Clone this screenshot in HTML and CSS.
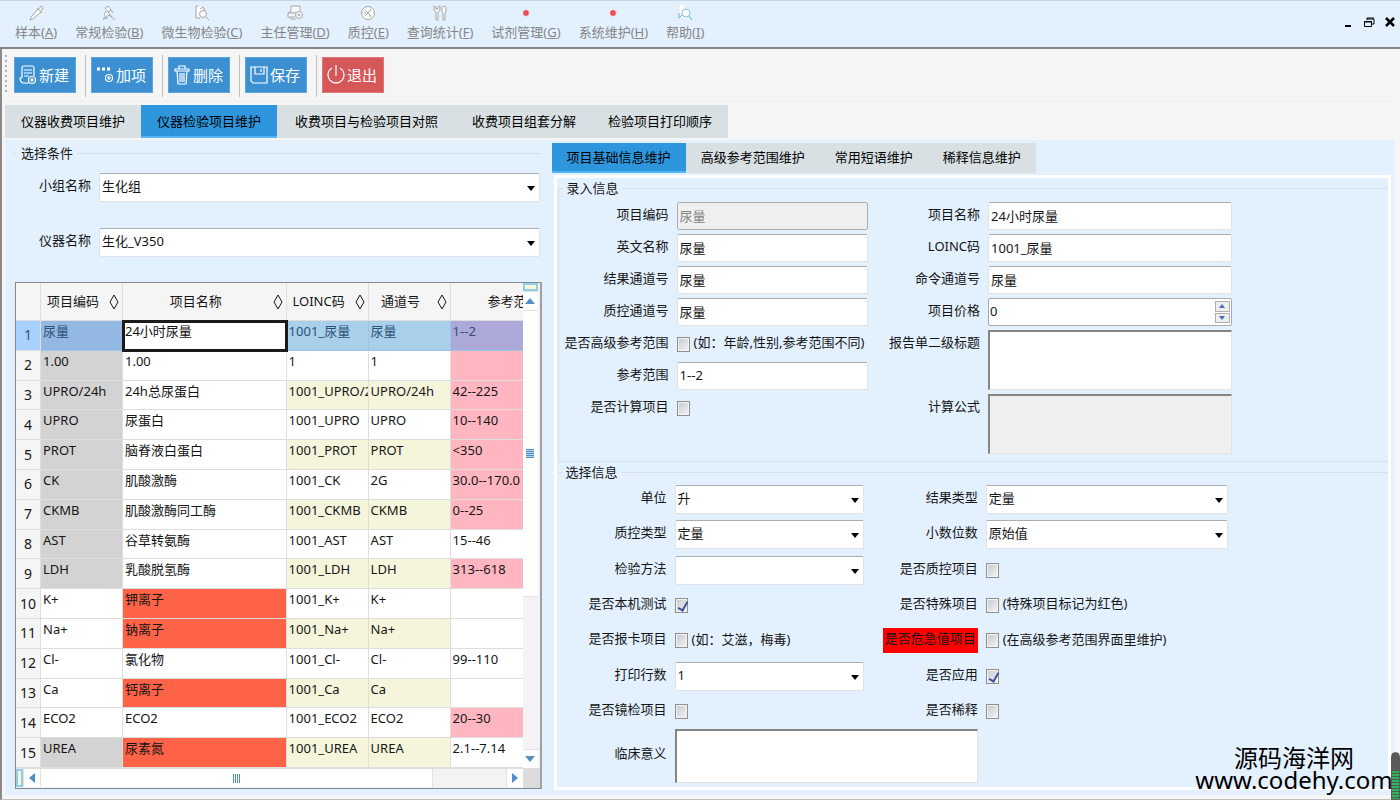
FILE: index.html
```html
<!DOCTYPE html>
<html lang="zh-CN">
<head>
<meta charset="utf-8">
<title>项目维护</title>
<link rel="stylesheet" href="styles.css">
</head>
<body>
<header class="menubar">
  <nav class="menu">
    <a href="#"><svg class="mi" viewBox="0 0 16 16"><path d="M2 15l1-3 7-8 3 3-8 7zM9 3l5 5M11 4l2-3 2 2-2 3"/></svg><span>样本(<u>A</u>)</span></a>
    <a href="#"><svg class="mi" viewBox="0 0 16 16"><path d="M4 3l3-2 3 4-3 2zM7 7l4 5M10 5l2 3M5 6c-2 2-2 5 0 7M2 15l6-5M8 10l6 5M2 13h5"/></svg><span>常规检验(<u>B</u>)</span></a>
    <a href="#"><svg class="mi" viewBox="0 0 16 16"><path class="page" d="M2 1h6l3 3v9H2z"/><path d="M4 1H2v12h4M6 4l3-2 2 4"/><circle cx="9" cy="9" r="3.5"/><path d="M12 12l3 3"/></svg><span>微生物检验(<u>C</u>)</span></a>
    <a href="#"><svg class="mi" viewBox="0 0 16 16"><path d="M4 6V1h9v5M1 8h8M1 8v4h7M4 12v2h5M4 6L1 8"/><circle cx="12" cy="10" r="3.5"/><circle cx="12" cy="10" r="1"/></svg><span>主任管理(<u>D</u>)</span></a>
    <a href="#"><svg class="mi" viewBox="0 0 16 16"><circle cx="8" cy="8" r="6.5"/><path d="M5 5l6 6M11 4l-3 4-3 3M4 8h2M9 11h2"/></svg><span>质控(<u>E</u>)</span></a>
    <a href="#"><svg class="mi" viewBox="0 0 16 16"><path d="M2 1v4l2 2v8h2V7l2-2V1L6 2v2H4V2zM10 2c0-1 4-1 4 0v5l-1 1v7h-2V8l-1-1z"/></svg><span>查询统计(<u>F</u>)</span></a>
    <a href="#"><svg class="mi dot" viewBox="0 0 16 16"><circle cx="8" cy="8" r="3"/><circle class="core" cx="8" cy="8" r="1.5"/></svg><span>试剂管理(<u>G</u>)</span></a>
    <a href="#"><svg class="mi dot" viewBox="0 0 16 16"><circle cx="8" cy="8" r="3"/><circle class="core" cx="8" cy="8" r="1.5"/></svg><span>系统维护(<u>H</u>)</span></a>
    <a href="#"><svg class="mi help" viewBox="0 0 16 16"><path class="page" d="M2 0h6v13H2z"/><path d="M2 8v5l4-4"/><circle class="page" cx="9" cy="8" r="4"/><path d="M12 11l3 4"/></svg><span>帮助(<u>I</u>)</span></a>
  </nav>
  <div class="winbtns">
    <button type="button" aria-label="最小化"><svg viewBox="0 0 12 12"><path d="M3 10h6" stroke-width="2"/></svg></button>
    <button type="button" aria-label="还原"><svg viewBox="0 0 12 12"><path d="M4 2h7M4 3h7v5H9M4 2v2" /><path d="M1.500 5.500h7v5h-7zM1 6h8" /></svg></button>
    <button type="button" aria-label="关闭"><svg viewBox="0 0 12 12"><path d="M2 2l8 8M10 2l-8 8" stroke-width="2.500"/></svg></button>
  </div>
</header>

<div class="window">
  <div class="toolbar">
    <span class="grip"></span>
    <button type="button" class="tool"><svg viewBox="0 0 18 20"><path d="M3 13V3q0-2 2-2h8q2 0 2 2v8M5 5h8M5 8h8M5 11h5M3 13H1q0 4 3 5h6"/><circle cx="13" cy="15" r="3.5"/><path d="M11 15h4M13 13v4"/></svg>新建</button>
    <button type="button" class="tool"><svg viewBox="0 0 18 20"><path d="M1 4h3M6 4h3M11 4h3" stroke-width="3"/><circle cx="13" cy="13" r="3.500"/><path d="M11 13h4M13 11v4"/></svg>加项</button>
    <button type="button" class="tool"><svg viewBox="0 0 18 20"><path d="M2 4h14v2H2zM6 4V1h6v3M4 6l1 13h8l1-13M7 8v9M9 8v9M11 8v9"/></svg>删除</button>
    <button type="button" class="tool"><svg viewBox="0 0 18 20"><path d="M1 2h16v16H3l-2-2zM5 2v7h9V2M11 4v3"/></svg>保存</button>
    <button type="button" class="tool exit"><svg viewBox="0 0 18 20"><path d="M5 3a8 8 0 1 0 8 0M9 0v11"/></svg>退出</button>
  </div>

  <nav class="tabs main-tabs">
    <button type="button">仪器收费项目维护</button><button type="button" class="active">仪器检验项目维护</button><button type="button" class="long">收费项目与检验项目对照</button><button type="button">收费项目组套分解</button><button type="button">检验项目打印顺序</button>
  </nav>

  <main class="work">
    <section class="left">
      <fieldset class="filter">
        <legend>选择条件</legend>
        <label for="grp">小组名称</label><span class="combo"><select id="grp"><option>生化组</option></select></span>
        <label for="dev">仪器名称</label><span class="combo"><select id="dev"><option>生化_V350</option></select></span>
      </fieldset>

      <div class="grid">
        <div class="sheet">
        <table>
          <colgroup><col class="c-no"><col class="c-std"><col><col class="c-std"><col class="c-std"><col class="c-range"></colgroup>
          <thead><tr>
            <th></th>
            <th><div>项目编码<svg viewBox="0 0 10 16"><path d="M5 1l4 7-4 7-4-7z"/></svg></div></th>
            <th><div>项目名称<svg viewBox="0 0 10 16"><path d="M5 1l4 7-4 7-4-7z"/></svg></div></th>
            <th><div>LOINC码<svg viewBox="0 0 10 16"><path d="M5 1l4 7-4 7-4-7z"/></svg></div></th>
            <th><div>通道号<svg viewBox="0 0 10 16"><path d="M5 1l4 7-4 7-4-7z"/></svg></div></th>
            <th class="cut">参考范围</th>
          </tr></thead>
          <tbody>
            <tr class="sel"><th>1</th><td class="gray">尿量</td><td class="cur">24小时尿量</td><td>1001_尿量</td><td>尿量</td><td class="pink">1--2</td></tr>
            <tr><th>2</th><td class="gray">1.00</td><td>1.00</td><td>1</td><td>1</td><td class="pink"></td></tr>
            <tr><th>3</th><td class="gray">UPRO/24h</td><td>24h总尿蛋白</td><td>1001_UPRO/24h</td><td>UPRO/24h</td><td class="pink">42--225</td></tr>
            <tr><th>4</th><td class="gray">UPRO</td><td>尿蛋白</td><td>1001_UPRO</td><td>UPRO</td><td class="pink">10--140</td></tr>
            <tr><th>5</th><td class="gray">PROT</td><td>脑脊液白蛋白</td><td>1001_PROT</td><td>PROT</td><td class="pink">&lt;350</td></tr>
            <tr><th>6</th><td class="gray">CK</td><td>肌酸激酶</td><td>1001_CK</td><td>2G</td><td class="pink">30.0--170.0</td></tr>
            <tr><th>7</th><td class="gray">CKMB</td><td>肌酸激酶同工酶</td><td>1001_CKMB</td><td>CKMB</td><td class="pink">0--25</td></tr>
            <tr><th>8</th><td class="gray">AST</td><td>谷草转氨酶</td><td>1001_AST</td><td>AST</td><td>15--46</td></tr>
            <tr><th>9</th><td class="gray">LDH</td><td>乳酸脱氢酶</td><td>1001_LDH</td><td>LDH</td><td class="pink">313--618</td></tr>
            <tr><th>10</th><td>K+</td><td class="tomato">钾离子</td><td>1001_K+</td><td>K+</td><td></td></tr>
            <tr><th>11</th><td>Na+</td><td class="tomato">钠离子</td><td>1001_Na+</td><td>Na+</td><td></td></tr>
            <tr><th>12</th><td>Cl-</td><td>氯化物</td><td>1001_Cl-</td><td>Cl-</td><td>99--110</td></tr>
            <tr><th>13</th><td>Ca</td><td class="tomato">钙离子</td><td>1001_Ca</td><td>Ca</td><td></td></tr>
            <tr><th>14</th><td>ECO2</td><td>ECO2</td><td>1001_ECO2</td><td>ECO2</td><td class="pink">20--30</td></tr>
            <tr><th>15</th><td class="gray">UREA</td><td class="tomato">尿素氮</td><td>1001_UREA</td><td>UREA</td><td>2.1--7.14</td></tr>
          </tbody>
        </table>
        </div>
        <div class="vbar">
          <i class="split"></i>
          <button type="button" aria-label="向上滚动"><svg viewBox="0 0 10 6"><path d="M0 6l5-6 5 6z"/></svg></button>
          <div class="thumb"><i class="lines"></i></div><div class="rest"></div>
          <button type="button" aria-label="向下滚动"><svg viewBox="0 0 10 6"><path d="M0 0l5 6 5-6z"/></svg></button>
        </div>
        <div class="hbar">
          <i class="split"></i>
          <button type="button" aria-label="向左滚动"><svg viewBox="0 0 6 10"><path d="M6 0L0 5l6 5z"/></svg></button>
          <div class="thumb"><i class="lines"></i></div><div class="rest"></div>
          <button type="button" aria-label="向右滚动"><svg viewBox="0 0 6 10"><path d="M0 0l6 5-6 5z"/></svg></button>
        </div>
        <div class="corner"></div>
      </div>
    </section>

    <section class="right">
      <nav class="tabs sub-tabs">
        <button type="button" class="active">项目基础信息维护</button><button type="button">高级参考范围维护</button><button type="button">常用短语维护</button><button type="button">稀释信息维护</button>
      </nav>
      <div class="panel">
        <fieldset class="entry">
          <legend>录入信息</legend>
          <div class="form">
            <label for="f1">项目编码</label><input id="f1" type="text" value="尿量" disabled>
            <label for="g1">项目名称</label><input id="g1" type="text" value="24小时尿量">
            <label for="f2">英文名称</label><input id="f2" type="text" value="尿量">
            <label for="g2">LOINC码</label><input id="g2" type="text" value="1001_尿量">
            <label for="f3">结果通道号</label><input id="f3" type="text" value="尿量">
            <label for="g3">命令通道号</label><input id="g3" type="text" value="尿量">
            <label for="f4">质控通道号</label><input id="f4" type="text" value="尿量">
            <label for="g4">项目价格</label>
            <span class="spin"><input id="g4" type="text" value="0"><span class="updown"><button type="button" aria-label="增加"><svg viewBox="0 0 6 4"><path d="M0 4l3-4 3 4z"/></svg></button><button type="button" aria-label="减少"><svg viewBox="0 0 6 4"><path d="M0 0l3 4 3-4z"/></svg></button></span></span>
            <label for="f5">是否高级参考范围</label><span class="check"><input id="f5" type="checkbox"><span>(如：年龄,性别,参考范围不同)</span></span>
            <label for="g5">报告单二级标题</label><textarea id="g5" class="two"></textarea>
            <label for="f6">参考范围</label><input id="f6" type="text" value="1--2">
            <label for="f7">是否计算项目</label><span class="check"><input id="f7" type="checkbox"></span>
            <label for="g7">计算公式</label><textarea id="g7" class="two" disabled></textarea>
          </div>
        </fieldset>
        <fieldset class="choice">
          <legend>选择信息</legend>
          <div class="form options">
            <label for="h1">单位</label><span class="combo"><select id="h1"><option>升</option></select></span>
            <label for="k1">结果类型</label><span class="combo"><select id="k1"><option>定量</option></select></span>
            <label for="h2">质控类型</label><span class="combo"><select id="h2"><option>定量</option></select></span>
            <label for="k2">小数位数</label><span class="combo"><select id="k2"><option>原始值</option></select></span>
            <label for="h3">检验方法</label><span class="combo"><select id="h3"><option></option></select></span>
            <label for="k3">是否质控项目</label><span class="check"><input id="k3" type="checkbox"></span>
            <label for="h4">是否本机测试</label><span class="check"><input id="h4" type="checkbox" checked></span>
            <label for="k4">是否特殊项目</label><span class="check"><input id="k4" type="checkbox"><span>(特殊项目标记为红色)</span></span>
            <label for="h5">是否报卡项目</label><span class="check"><input id="h5" type="checkbox"><span>(如：艾滋，梅毒)</span></span>
            <label for="k5" class="alert">是否危急值项目</label><span class="check"><input id="k5" type="checkbox"><span>(在高级参考范围界面里维护)</span></span>
            <label for="h6">打印行数</label><span class="combo"><select id="h6"><option>1</option></select></span>
            <label for="k6">是否应用</label><span class="check"><input id="k6" type="checkbox" checked></span>
            <label for="h7">是否镜检项目</label><span class="check"><input id="h7" type="checkbox"></span>
            <label for="k7">是否稀释</label><span class="check"><input id="k7" type="checkbox"></span>
            <label for="h8">临床意义</label><textarea id="h8" class="wide"></textarea>
          </div>
        </fieldset>
      </div>
    </section>
  </main>
</div>
<div class="meter"></div>
<div class="mark">源码海洋网<br>www.codehy.com</div>
</body>
</html>
```

FILE: styles.css
```css
* { box-sizing: border-box; }
html { height: 100%; }
body {
  margin: 0; min-height: 100%; display: flex; flex-direction: column; position: relative;
  font: 13px/18px "Noto Sans", "Noto Sans CJK SC", sans-serif; color: #151515; background: #f5f5f5;
}
button, input, select, textarea { font: inherit; color: inherit; margin: 0; border-radius: 0; }
button { padding: 0; border: 0; background: none; }
svg { fill: none; stroke: currentColor; display: block; }

.menubar {
  display: flex; justify-content: space-between; height: 49px; background: #e3f1ff;
  border-top: 1px solid #c6d6e6; border-bottom: 2px solid #858585;
}
.menu { display: flex; gap: 18px; padding: 4px 0 0 15px; }
.menu a { display: flex; flex-direction: column; align-items: center; gap: 1px; color: #858585; text-decoration: none; line-height: 20px; white-space: nowrap; }
.mi { width: 16px; height: 16px; stroke: #a5a5a5; fill: #fbfbfb; }
.mi .page { fill: #fff; stroke: #e8e8e8; }
.mi.dot { stroke: #f0959a; fill: #f25560; }
.mi .core { fill: #ff8a90; stroke: #df2835; }
.mi.help { stroke: #64b2e4; }
.mi.help circle { stroke: #84c4ef; }
.winbtns { display: flex; gap: 9px; align-items: center; padding: 0 4px 4px 0; color: #000; }
.winbtns svg { width: 12px; height: 12px; }

.window { flex: 1; display: flex; flex-direction: column; border-left: 2px solid #8a8a8a; border-bottom: 1px solid #c0c0c0; padding: 0 6px 4px 3px; }
.toolbar { display: flex; align-items: center; height: 53px; border-bottom: 1px solid #efefef; }
.grip { width: 2px; height: 40px; margin-right: 7px; background: repeating-linear-gradient(#b0b0b0 0 2px, transparent 2px 5px); }
.tool {
  display: flex; align-items: center; gap: 2px; width: 62px; height: 36px; padding-left: 4px; margin-right: 15px;
  background: #3c90d2; border: 1px solid #5ca5de; color: #fff; font-size: 15px; position: relative; white-space: nowrap;
}
.tool svg { width: 18px; height: 20px; stroke-width: 1.2; flex: none; }
.tool:not(.exit)::after { content: ""; position: absolute; left: 70px; top: -3px; width: 1px; height: 42px; background: #c0c0c0; }
.exit { background: #d65757; border-color: #df7777; }

.tabs { display: flex; align-self: flex-start; background: #d8e0e3; color: #000; }
.tabs button { white-space: nowrap; border-bottom: 2px solid transparent; }
.tabs .active { background: #2e96dd; border-bottom-color: #51b5f8; }
.main-tabs { margin: 3px 0 2px; height: 33px; }
.main-tabs button { padding: 0 16px; }
.main-tabs .long { padding: 0 18px; }
.sub-tabs { height: 30px; }
.sub-tabs button { padding: 0 15px; }

.work {
  flex: 1; display: grid; grid-template-columns: minmax(0, 535fr) minmax(0, 840fr); gap: 11px;
  background: #e3f1ff; padding: 3px 3px 3px 1px;
}
.left { display: flex; flex-direction: column; padding-left: 7px; min-width: 0; }
fieldset { margin: 0; padding: 0; min-width: 0; border: 0 solid #d9dfe4; }
legend { padding: 0 4px; margin-left: 4px; line-height: 20px; }
.filter {
  display: grid; grid-template-columns: 78px 1fr; column-gap: 8px; row-gap: 26px; align-items: center;
  border-top-width: 1px; padding: 10px 1px 25px 0;
}
.filter label, .form label { text-align: right; padding-bottom: 5px; }
.combo { position: relative; display: block; height: 29px; min-width: 0; }
.combo select { appearance: none; width: 100%; height: 100%; padding: 0 18px 3px 2px; background: #fff; border: 1px solid #e0e2e6; border-top-color: #abadb3; border-radius: 2px; }
.combo::after { content: ""; position: absolute; right: 5px; top: 13px; border: 4px solid transparent; border-top: 5px solid #000; border-bottom: 0; pointer-events: none; }

.grid { flex: 1; display: grid; grid-template-columns: minmax(0, 1fr) 17px; grid-template-rows: 1fr 20px; border: 1px solid #828790; border-right: 2px solid #a0a0a0; margin: 0 -1px 3px 2px; background: #f3f3f3; }
.sheet { overflow: hidden; }
table { width: 100%; height: 100%; table-layout: fixed; border-collapse: separate; border-spacing: 0; background: #fff; }
.c-no { width: 25px; } .c-std { width: 82px; } .c-range { width: 72px; }
th, td { font-weight: normal; border-right: 1px solid #dedede; border-bottom: 1px solid #dedede; padding: 0; overflow: hidden; white-space: nowrap; }
th { background: #f5f5f5; }
thead th { height: 38px; padding-bottom: 2px; }
thead th div { display: flex; align-items: center; justify-content: center; padding: 0 22px 0 5px; position: relative; }
thead th svg { position: absolute; right: 3px; top: 2px; width: 10px; height: 16px; }
thead .cut { padding-left: 37px; text-align: left; }
tbody th { font-size: 14px; vertical-align: middle; }
td { padding: 1px 0 0 2px; vertical-align: top; }
th:last-child, td:last-child { border-right: 0; }
tbody tr:nth-child(odd) td:nth-child(4), tbody tr:nth-child(odd) td:nth-child(5) { background: #f5f5dc; }
.gray { background: #d3d3d3; }
.pink { background: #ffb6c1; }
.tomato { background: #ff6347; }
tbody .sel th { background: #a8d1ff; color: #35567a; }
tbody .sel td { color: #2c5178; border-color: #9fc4e8; }
tbody tr.sel:nth-child(n) td:nth-child(n+4) { background: #a8d0ea; }
tbody .sel td.gray { background: #93b9e3; }
tbody tr.sel:nth-child(n) td.pink:nth-child(n+4) { background: #aca9d8; }
tbody .sel td.cur { background: #fff; color: #111; outline: 3px solid #1c1a1a; outline-offset: -2px; }

.vbar, .hbar { display: flex; gap: 1px; background: #e2e2e2; }
.vbar { flex-direction: column; border-right: 2px solid #f3f3f3; }
.hbar { border-top: 1px solid #dedede; border-bottom: 1px solid #f3f3f3; }
.vbar button, .hbar button { display: grid; place-items: center; background: #fff; flex: none; }
.vbar button { height: 18px; } .hbar button { width: 16px; }
.vbar button svg { width: 10px; height: 6px; } .hbar button svg { width: 6px; height: 10px; }
.vbar svg, .hbar svg { fill: #4f8fc3; stroke: none; }
.split { flex: none; border: 2px solid #8fd0e8; background: #f9f6d8; }
.vbar .split { height: 8px; } .hbar .split { width: 7px; }
.thumb { display: grid; place-items: center; background: #fff; }
.rest { background: #f3f3f3; }
.vbar .thumb { flex: 285; } .vbar .rest { flex: 152; }
.hbar .thumb { flex: 391; } .hbar .rest { flex: 73; }
.vbar .lines { width: 8px; height: 9px; background: repeating-linear-gradient(#4f8fc3 0 1px, #b9d3e8 1px 2px); }
.hbar .lines { width: 7px; height: 9px; background: repeating-linear-gradient(90deg, #4f8fc3 0 1px, #fff 1px 2px); }
.corner { background: #dcdcdc; }

.right { display: flex; flex-direction: column; min-width: 0; }
.panel { flex: 1; display: flex; flex-direction: column; border: 3px solid #fff; margin: 2px 0 2px 2px; padding: 0 0 0 1px; }
.entry { border-width: 1px 0 1px 1px; padding: 4px 0 7px; }
.choice { flex: 1; display: flex; flex-direction: column; border-top-width: 1px; padding: 0 0 4px; }
.form { display: grid; grid-template-columns: 110px 191fr 104px 243fr 148fr; column-gap: 8px; row-gap: 4px; grid-auto-rows: 28px; align-items: center; }
.form label { grid-column: 1; white-space: nowrap; }
.form label:nth-of-type(even) { grid-column: 3; }
.form > input, .spin, .form textarea { width: 100%; height: 28px; border: 1px solid #e0e2e6; border-top-color: #abadb3; border-radius: 2px; background: #fff; padding: 0 2px 2px; }
.form input:disabled { background: #efefef; color: #858585; border-color: #abadb3; }
.form textarea { display: block; height: 100%; align-self: stretch; grid-row: span 2; border: 1px solid #e3e3e3; border-top: 2px solid #858585; border-left: 2px solid #858585; border-radius: 0; resize: none; }
.form textarea:disabled { background: #efefef; }
.entry .form label[for="f6"], .entry .form label[for="f7"] { grid-column: 1; }
.entry .form label[for="g7"] { grid-column: 3; }
.spin { display: flex; border: 1px solid #a6a9b0; padding: 1px; }
.spin input { flex: 1; min-width: 0; border: 0; padding: 0 0 2px; background: #fff; outline: 0; }
.updown { display: grid; grid-template-rows: 1fr 1fr; gap: 1px; width: 15px; padding: 1px 0; }
.updown button { display: grid; place-items: center; background: #eee; border: 1px solid #b0b0b0; }
.updown svg { width: 6px; height: 4px; fill: #4b6cb7; stroke: none; }
.check { display: flex; align-items: center; gap: 4px; white-space: nowrap; min-width: 0; }
.check span { padding-bottom: 4px; }
.check input { appearance: none; width: 13px; height: 15px; flex: none; position: relative; border: 1px solid #8e8f8f; outline: 1px solid #f4f4f4; outline-offset: -2px; background: linear-gradient(135deg, #c5c8cd, #f5f5f5); }
.check input:checked::after { content: ""; position: absolute; left: 4px; top: 1px; width: 4px; height: 9px; border: solid #3f539c; border-width: 0 2px 2px 0; transform: rotate(30deg); }
.options { flex: 1; grid-template-columns: 109px 188fr 106px 241fr 151fr; row-gap: 0; grid-template-rows: repeat(7, 1fr) 54px; }
.options textarea.wide { grid-column: 2 / 4; grid-row: auto; }
.form .alert { justify-self: end; background: #f00; padding: 1px 2px 6px; }

.meter { position: absolute; right: 0; bottom: 0; width: 9px; height: 48px; border-radius: 5px 5px 0 0; background: linear-gradient(#5a5a5a 0 17px, transparent 17px), repeating-linear-gradient(#2fb457 0 2px, #4a5a50 2px 3px); border: 1px solid #5a5a5a; }
.mark { position: absolute; right: 6px; bottom: 9px; width: 200px; font-size: 24px; line-height: 22px; text-align: center; color: #000; white-space: nowrap; }
```
